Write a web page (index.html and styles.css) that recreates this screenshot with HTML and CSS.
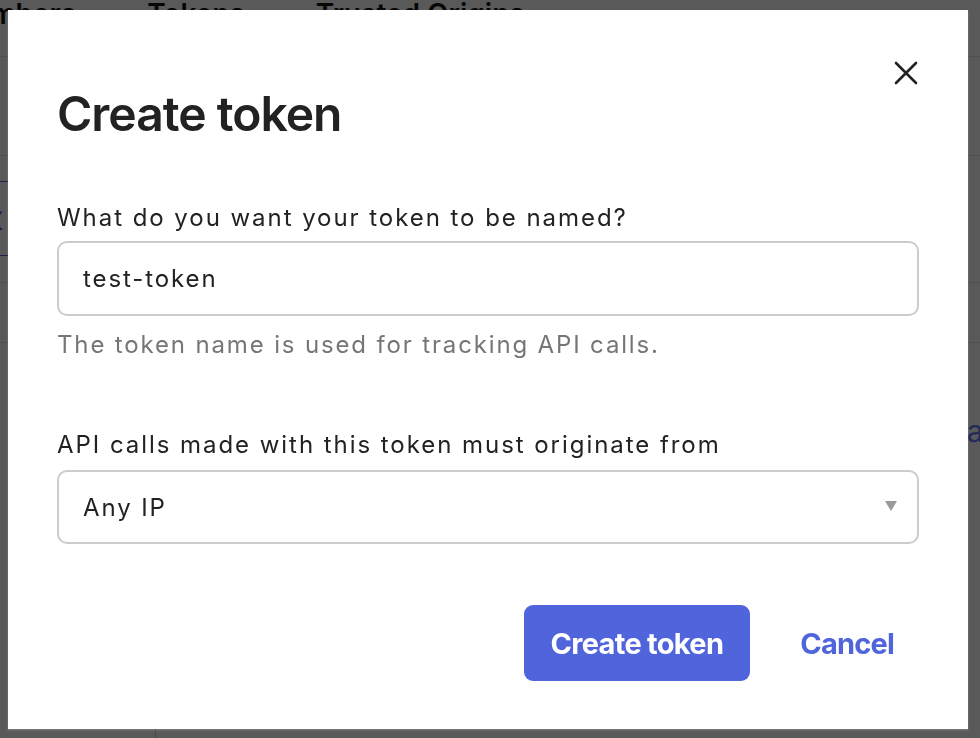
FILE: index.html
```html
<!DOCTYPE html>
<html lang="en">
<head>
<meta charset="utf-8">
<title>Create token</title>
<link rel="stylesheet" href="styles.css">
</head>
<body>
<div class="page">
  <nav class="tabs">
    <span class="tab">Members</span>
    <span class="tab">Tokens</span>
    <span class="tab">Trusted Origins</span>
  </nav>
  <div class="content">
    <div class="row row-first">
      <div class="pager"><span class="pager-arrow">&lsaquo;</span></div>
    </div>
    <div class="row row-second"></div>
    <div class="link-line"><span class="link">Learn</span></div>
  </div>
  <div class="footer-col"></div>
</div>

<div class="overlay"></div>

<div class="modal" role="dialog" aria-labelledby="modal-title">
  <button class="close" type="button" aria-label="Close">
    <svg width="24" height="24" viewBox="0 0 24 24" aria-hidden="true">
      <path d="M2 2 L22 22 M22 2 L2 22" stroke="#222" stroke-width="2.6" stroke-linecap="round" fill="none"/>
    </svg>
  </button>
  <h1 class="title" id="modal-title">Create token</h1>

  <label class="label label-name" for="token-name">What do you want your token to be named?</label>
  <input class="field" id="token-name" type="text" value="test-token">
  <p class="help">The token name is used for tracking API calls.</p>

  <label class="label label-origin">API calls made with this token must originate from</label>
  <div class="field select">
    <span>Any IP</span>
    <svg class="caret" width="12" height="10" viewBox="0 0 12 10" aria-hidden="true">
      <path d="M0 0 H12 L6 10 Z" fill="#9a9a9a"/>
    </svg>
  </div>

  <div class="actions">
    <button class="btn-primary" type="button">Create token</button>
    <button class="btn-link" type="button">Cancel</button>
  </div>
</div>
</body>
</html>
```

FILE: styles.css
```css
* { box-sizing: border-box; }

html, body {
  margin: 0;
  height: 100%;
}

body {
  font-family: Inter, "Noto Sans", sans-serif;
  background: #ffffff;
  color: #222222;
  overflow: hidden;
}

/* ---------- page behind the dialog ---------- */
.page {
  height: 100%;
  position: relative;
  overflow: hidden;
}

.tabs {
  display: flex;
  gap: 71px;
  height: 57px;
  margin-left: -52px;
  border-bottom: 1px solid #e2e2e2;
}

.tab {
  font-size: 28px;
  font-weight: 600;
  line-height: 36px;
  margin-top: -4px;
  color: #111;
  white-space: nowrap;
}

.content {
  padding-top: 98px;
}

.row {
  border-top: 1px solid #e2e2e2;
}

.row-first {
  height: 127px;
  padding-top: 25px;
}

.pager {
  width: 60px;
  height: 75px;
  margin-left: -52px;
  border-top: 1px solid #4a5cd0;
  border-bottom: 1px solid #4a5cd0;
  display: flex;
  align-items: center;
  justify-content: flex-end;
  padding-right: 4px;
}

.pager-arrow {
  color: #4a5cd0;
  font-size: 40px;
  line-height: 1;
}

.row-second {
  height: 61px;
  border-bottom: 1px solid #e2e2e2;
}

.link-line {
  display: flex;
  margin-top: 70px;
  padding-left: 932px;
}

.link {
  color: #6478ff;
  font-size: 30px;
  white-space: nowrap;
}

.footer-col {
  position: absolute;
  left: 155px;
  bottom: 0;
  width: 1px;
  height: 40px;
  background: #cfcfcf;
}

/* ---------- overlay ---------- */
.overlay {
  position: fixed;
  inset: 0;
  background: rgba(0, 0, 0, 0.65);
}

/* ---------- dialog ---------- */
.modal {
  position: fixed;
  left: 8px;
  top: 10px;
  width: 960px;
  height: 719px;
  background: #ffffff;
  padding: 75px 49px 0;
  display: flex;
  flex-direction: column;
  box-shadow: 0 1px 2px rgba(255, 255, 255, 0.25);
}

.close {
  position: absolute;
  top: 51px;
  right: 50px;
  width: 24px;
  height: 24px;
  padding: 0;
  border: 0;
  background: none;
  cursor: pointer;
  display: block;
}

.close svg { display: block; }

.title {
  margin: 0;
  font-size: 48px;
  line-height: 58px;
  font-weight: 600;
  letter-spacing: -1px;
  color: #222222;
}

.label {
  display: block;
  font-size: 24px;
  line-height: 36px;
  letter-spacing: 1.95px;
  color: #222222;
}

.label-name { margin-top: 57px; }
.label-origin { margin-top: 64px; }

.field {
  display: flex;
  align-items: center;
  width: 100%;
  height: 75px;
  margin: 5px 0 0;
  padding: 0 20px 0 24px;
  border: 2px solid #cccccc;
  border-radius: 10px;
  background: #ffffff;
  font-family: inherit;
  font-size: 24px;
  letter-spacing: 1.9px;
  color: #222222;
  outline: none;
}

.select {
  height: 74px;
  margin-top: 7px;
  justify-content: space-between;
}

.caret { display: block; margin-top: -2px; }

.help {
  margin: 11px 0 0;
  font-size: 24px;
  line-height: 36px;
  letter-spacing: 1.85px;
  color: #767676;
}

.actions {
  display: flex;
  justify-content: flex-end;
  align-items: center;
  gap: 25px;
  margin-top: 61px;
}

.btn-primary {
  height: 76px;
  padding: 0 27px;
  border: 0;
  border-radius: 9px;
  background: #5065db;
  color: #ffffff;
  font-family: inherit;
  font-size: 29px;
  font-weight: 700;
  letter-spacing: -0.7px;
  cursor: pointer;
}

.btn-link {
  height: 76px;
  padding: 0 25px;
  border: 0;
  background: none;
  color: #5065db;
  font-family: inherit;
  font-size: 29px;
  font-weight: 700;
  letter-spacing: -0.8px;
  cursor: pointer;
}
```
